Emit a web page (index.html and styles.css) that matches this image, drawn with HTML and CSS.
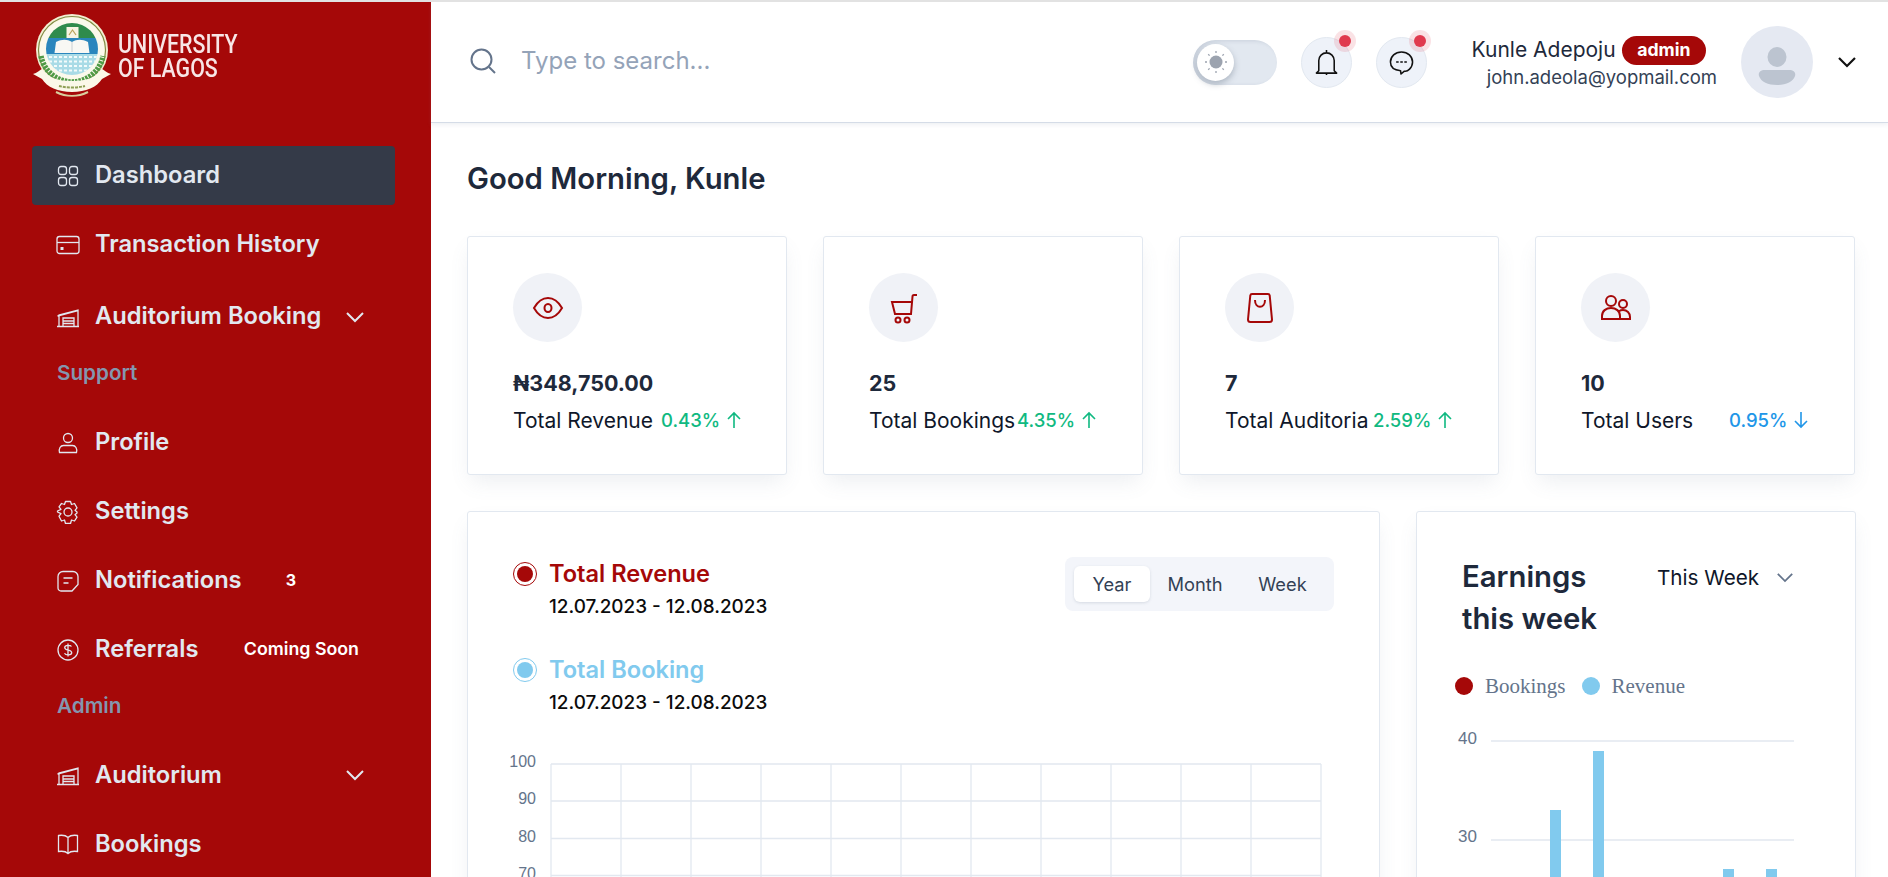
FILE: index.html
```html
<!DOCTYPE html>
<html lang="en">
<head>
<meta charset="utf-8">
<title>Dashboard</title>
<link rel="stylesheet" href="styles.css">
</head>
<body>
<div class="shell">
  <aside class="sidebar">
    <div class="brand">
      <svg class="crest" viewBox="0 0 80 84" aria-hidden="true">
        <defs><clipPath id="field"><circle cx="40" cy="35" r="26"/></clipPath></defs>
        <circle cx="40" cy="36" r="36" fill="#f3eed2"/>
        <circle cx="40" cy="36" r="33.500" fill="none" stroke="#7f8c45" stroke-width="1.200"/>
        <circle cx="40" cy="36" r="32.500" fill="#fbf9ec"/>
        <g clip-path="url(#field)">
          <rect x="10" y="5" width="60" height="19" fill="#2f8b4c"/>
          <rect x="10" y="24" width="60" height="16" fill="#2a86bd"/>
          <rect x="10" y="40" width="60" height="24" fill="#a9dbe6"/>
          <path d="M12 43h56M12 47.500h56M12 52h56M12 56.500h56" stroke="#f2fbfb" stroke-width="1.800" stroke-dasharray="3 2"/>
        </g>
        <rect x="34.500" y="13" width="12" height="11" fill="#f7f4e2"/>
        <path d="M37 21l3.500-5 3.500 5" fill="none" stroke="#b9a35a" stroke-width="1.200"/>
        <path d="M24 28c6-3 11-3 16 0 5-3 10-3 16 0l1.500 11h-35z" fill="#f8f8f4"/>
        <path d="M40 28v10" stroke="#c8ced2" stroke-width="1"/>
        <path d="M9 42a31.500 31.500 0 0 0 62 0" fill="none" stroke="#4f9a45" stroke-width="5.500" stroke-dasharray="2.600 1"/>
        <path d="M1 60c4-1 7-4 9-5 7 9 16 12 30 12s23-3 30-12c2 1 5 4 9 5l-9 5c-5 8-16 13-30 13S15 73 10 65z" fill="#fbf8e8"/>
        <path d="M27 72c8 2 18 2 26 0" stroke="#8f9f55" stroke-width="2" fill="none" stroke-dasharray="3 1"/>
        <path d="M24 78c10 5 22 5 32 0" stroke="#d8cf9e" stroke-width="2" fill="none"/>
      </svg>
      <div class="brand-name">UNIVERSITY<br>OF LAGOS</div>
    </div>
    <nav class="nav">
      <a class="nav-item active">
        <svg class="nav-icon" viewBox="0 0 24 24"><rect x="2.500" y="2.500" width="8" height="8" rx="2.500"/><rect x="13.500" y="2.500" width="8" height="8" rx="2.500"/><rect x="2.500" y="13.500" width="8" height="8" rx="2.500"/><rect x="13.500" y="13.500" width="8" height="8" rx="2.500"/></svg>
        <span class="nav-text">Dashboard</span>
      </a>
      <a class="nav-item">
        <svg class="nav-icon" viewBox="0 0 24 24"><rect x="1" y="3.500" width="22" height="17" rx="2.500"/><path d="M1 9.500h22"/><rect x="4.500" y="14" width="3" height="3" fill="currentColor" stroke="none"/></svg>
        <span class="nav-text">Transaction History</span>
      </a>
      <a class="nav-item nav-item-wide">
        <svg class="nav-icon" viewBox="0 0 24 24"><path d="M1 21.500h22M3 21.500V10l19-5v16.500M1.500 11L22 5.500M7 21.500V13h11v8.500M7 16h11M7 18.500h11"/></svg>
        <span class="nav-text">Auditorium Booking</span>
        <svg class="nav-chevron" viewBox="0 0 20 12"><path d="M2 2l8 8 8-8"/></svg>
      </a>
      <div class="nav-label">Support</div>
      <a class="nav-item">
        <svg class="nav-icon" viewBox="0 0 24 24"><circle cx="12" cy="7" r="4.500"/><path d="M3.500 21.500c-1-4 1-7 4-7h9c3 0 5 3 4 7z"/></svg>
        <span class="nav-text">Profile</span>
      </a>
      <a class="nav-item">
        <svg class="nav-icon" viewBox="0 0 24 24"><circle cx="12" cy="12" r="4"/><path d="M9.500 1.500h5l1 3 3-1 2.500 4.300-2 2.500 2 1.700v1l-2 1.700 2 2.500-2.500 3.800-3-1-1 3.500h-5l-1-3.500-3 1L3 16.200l2-2.500-3.500-1.700v-1L5 9.300 3 6.800l2.500-3.300 3 1z" stroke-linejoin="round"/></svg>
        <span class="nav-text">Settings</span>
      </a>
      <a class="nav-item">
        <svg class="nav-icon" viewBox="0 0 24 24"><path d="M7 2.500h10a5 5 0 0 1 5 5v8l-6 6.500H5a3 3 0 0 1-3-3V7.500a5 5 0 0 1 5-5z"/><path d="M7.500 9h9M7.500 14h5"/></svg>
        <span class="nav-text">Notifications</span>
        <span class="nav-count">3</span>
      </a>
      <a class="nav-item">
        <svg class="nav-icon" viewBox="0 0 24 24"><circle cx="12" cy="12" r="10"/><path d="M15.500 8.500c-1-1.500-6.500-2-6.800 1 0 3.500 7 1.800 7 5.200 0 2.800-6 2.800-7.200.6M12 5.500v13"/></svg>
        <span class="nav-text">Referrals</span>
        <span class="nav-soon">Coming Soon</span>
      </a>
      <div class="nav-label nav-label-admin">Admin</div>
      <a class="nav-item">
        <svg class="nav-icon" viewBox="0 0 24 24"><path d="M1 21.500h22M3 21.500V10l19-5v16.500M1.500 11L22 5.500M7 21.500V13h11v8.500M7 16h11M7 18.500h11"/></svg>
        <span class="nav-text">Auditorium</span>
        <svg class="nav-chevron" viewBox="0 0 20 12"><path d="M2 2l8 8 8-8"/></svg>
      </a>
      <a class="nav-item">
        <svg class="nav-icon" viewBox="0 0 24 24"><path d="M12 5.500C10 3.500 6 3 2.500 3.500v16c3.500-.5 7.500 0 9.500 2 2-2 6-2.500 9.500-2v-16C18 3 14 3.500 12 5.500zM12 5.500v16"/></svg>
        <span class="nav-text">Bookings</span>
      </a>
    </nav>
  </aside>

  <div class="content">
    <header class="topbar">
      <svg class="search-icon" viewBox="0 0 26 26"><circle cx="11.500" cy="11.500" r="10"/><path d="M19 19l6 6"/></svg>
      <span class="search-text">Type to search...</span>
      <div class="topbar-right">
        <div class="toggle">
          <div class="toggle-knob">
            <svg class="sun" viewBox="0 0 24 24"><circle cx="12" cy="12" r="6.500" fill="#9ca3af"/><path d="M12 1v2M12 21v2M1 12h2M21 12h2M4.200 4.200l1.400 1.400M18.400 18.400l1.400 1.400M4.200 19.800l1.400-1.400M18.400 5.600l1.400-1.400" stroke="#9ca3af" stroke-width="1.300"/></svg>
          </div>
        </div>
        <div class="round-btn">
          <svg class="round-icon" viewBox="0 0 24 28"><path d="M12 1v2.500M12 25v2M4 22.500V12a8 8 0 0 1 16 0v10.500l2.500 2.500h-21z" stroke-linejoin="round"/></svg>
          <span class="dot"></span>
        </div>
        <div class="round-btn">
          <svg class="round-icon" viewBox="0 0 26 26"><path d="M13 2c6.500 0 11.500 4.500 11.500 10.500S19 23 16 22l-3.500 3-.5-3.500C6 21 1.500 18 1.500 12.500 1.500 6.500 6.500 2 13 2z" stroke-linejoin="round"/><path d="M8 12.500h1.500M12.300 12.500h1.500M16.500 12.500H18" stroke-linecap="round"/></svg>
          <span class="dot"></span>
        </div>
        <div class="user">
          <div class="user-line"><span class="user-name">Kunle Adepoju</span><span class="badge">admin</span></div>
          <div class="user-mail">john.adeola@yopmail.com</div>
        </div>
        <div class="avatar">
          <svg viewBox="0 0 72 72"><ellipse cx="36" cy="31" rx="9.500" ry="10" fill="#bcc4d0"/><path d="M24 44h24c5 0 7 3 6 6-2 6-9 9-18 9s-16-3-18-9c-1-3 1-6 6-6z" fill="#bcc4d0"/></svg>
        </div>
        <svg class="user-chevron" viewBox="0 0 20 12"><path d="M2 2l8 8 8-8"/></svg>
      </div>
    </header>

    <main class="main">
      <h1 class="greeting">Good Morning, Kunle</h1>
      <section class="stats">
        <article class="card stat">
          <div class="stat-icon"><svg viewBox="0 0 32 32"><path d="M2 16C6 9 11 6 16 6s10 3 14 10c-4 7-9 10-14 10S6 23 2 16z"/><ellipse cx="16" cy="16" rx="3.500" ry="4"/></svg></div>
          <div class="stat-value">₦348,750.00</div>
          <div class="stat-row"><span class="stat-label">Total Revenue</span><span class="stat-pct up">0.43%</span><svg class="stat-arrow up" viewBox="0 0 16 18"><path d="M8 17V2M2 8l6-6 6 6"/></svg></div>
        </article>
        <article class="card stat">
          <div class="stat-icon"><svg viewBox="0 0 32 32"><path d="M29 3h-3c-1 0-1.500.5-1.500 1.500L23 22H7L4 10h21"/><circle cx="10" cy="28" r="2.500"/><circle cx="19" cy="28" r="2.500"/></svg></div>
          <div class="stat-value">25</div>
          <div class="stat-row"><span class="stat-label">Total Bookings</span><span class="stat-pct up">4.35%</span><svg class="stat-arrow up" viewBox="0 0 16 18"><path d="M8 17V2M2 8l6-6 6 6"/></svg></div>
        </article>
        <article class="card stat">
          <div class="stat-icon"><svg viewBox="0 0 32 32"><path d="M8 2h16c1 0 1.500.5 1.700 1.500l2.300 24c0 1.500-1 2.500-2.500 2.500h-19C5 30 4 29 4 27.500l2.300-24C6.500 2.500 7 2 8 2z" stroke-linejoin="round"/><path d="M11 8c0 9 10 9 10 0"/></svg></div>
          <div class="stat-value">7</div>
          <div class="stat-row"><span class="stat-label">Total Auditoria</span><span class="stat-pct up">2.59%</span><svg class="stat-arrow up" viewBox="0 0 16 18"><path d="M8 17V2M2 8l6-6 6 6"/></svg></div>
        </article>
        <article class="card stat">
          <div class="stat-icon"><svg viewBox="0 0 32 32"><circle cx="11" cy="9" r="5"/><circle cx="23" cy="12" r="4"/><path d="M2 27v-3c0-5 4-8 9-8s9 3 9 8v3zM20 27h10v-2c0-4-3-7-7-7-1.500 0-3 .5-4 1.200"/></svg></div>
          <div class="stat-value">10</div>
          <div class="stat-row"><span class="stat-label">Total Users</span><span class="stat-pct down">0.95%</span><svg class="stat-arrow down" viewBox="0 0 16 18"><path d="M8 1v15M2 10l6 6 6-6"/></svg></div>
        </article>
      </section>

      <section class="charts">
        <article class="card chart-main">
          <div class="chart-head">
            <div class="series-list">
              <div class="series">
                <span class="radio radio-red"></span>
                <div><div class="series-name name-red">Total Revenue</div><div class="series-date">12.07.2023 - 12.08.2023</div></div>
              </div>
              <div class="series">
                <span class="radio radio-blue"></span>
                <div><div class="series-name name-blue">Total Booking</div><div class="series-date">12.07.2023 - 12.08.2023</div></div>
              </div>
            </div>
            <div class="tabs"><span class="tab tab-on">Year</span><span class="tab">Month</span><span class="tab">Week</span></div>
          </div>
          <svg class="line-chart" viewBox="0 0 810 160">
            <g class="axis-text"><text x="23" y="4" text-anchor="end">100</text><text x="23" y="41" text-anchor="end">90</text><text x="23" y="79" text-anchor="end">80</text><text x="23" y="116" text-anchor="end">70</text></g>
            <g class="grid-lines">
              <path d="M38 1h770M38 38h770M38 75.500h770M38 112.500h770"/>
              <path d="M38 1v150M108 1v150M178 1v150M248 1v150M318 1v150M388 1v150M458 1v150M528 1v150M598 1v150M668 1v150M738 1v150M808 1v150"/>
            </g>
          </svg>
        </article>
        <article class="card chart-side">
          <div class="side-head">
            <h2 class="side-title">Earnings this week</h2>
            <div class="side-select"><span>This Week</span><svg class="select-chevron" viewBox="0 0 20 12"><path d="M2 2l8 8 8-8"/></svg></div>
          </div>
          <div class="legend">
            <span class="legend-dot dot-red"></span><span class="legend-text">Bookings</span>
            <span class="legend-dot dot-blue"></span><span class="legend-text">Revenue</span>
          </div>
          <svg class="bar-chart" viewBox="0 0 360 200">
            <g class="axis-text"><text x="17" y="13">40</text><text x="17" y="111">30</text></g>
            <path class="grid-lines" d="M50 10h303M50 109h303"/>
            <g class="bars"><rect x="109" y="79" width="11" height="121"/><rect x="152" y="20" width="11" height="180"/><rect x="282" y="138" width="11" height="62"/><rect x="325" y="138" width="11" height="62"/></g>
          </svg>
        </article>
      </section>
    </main>
  </div>
</div>
</body>
</html>
```

FILE: styles.css
```css
* { box-sizing: border-box; }
html, body { margin: 0; height: 877px; overflow: hidden; background: #fff; }
body { font-family: Inter, "Noto Sans", sans-serif; color: #1e293b; }
.shell { display: flex; height: 877px; border-top: 2px solid #e2e2e2; overflow: hidden; }

/* sidebar */
.sidebar { flex: 0 0 431px; background: #a50808; padding: 12px 36px 0 32px; overflow: hidden; }
.brand { display: flex; align-items: flex-start; height: 132px; }
.crest { width: 80px; height: 84px; flex: none; filter: blur(.6px); }
.brand-name { margin: 19px 0 0 6px; font-family: Roboto, sans-serif; font-size: 25px; line-height: 24px; font-weight: 500; color: #f8e6e6; white-space: nowrap; transform: scaleX(.855); transform-origin: left center; filter: blur(.3px); }
.nav { display: flex; flex-direction: column; }
.nav-item { display: flex; align-items: center; height: 59px; margin-bottom: 10px; padding: 0 30px 0 25px; border-radius: 4px; color: #e2e8f0; flex: none; }
.nav-item.active { background: #343a48; }
.nav-item-wide { margin-top: 3px; }
.nav-icon { width: 24px; height: 24px; flex: none; fill: none; stroke: currentColor; stroke-width: 1.3; margin: 0 15px 0 -1px; }
.nav-text { font-size: 23.700px; font-weight: 600; white-space: nowrap; margin-top: -1.600px; }
.nav-chevron { width: 20px; height: 12px; flex: none; fill: none; stroke: currentColor; stroke-width: 2; margin-left: auto; }
.nav-count { margin: -1.600px 69px 0 auto; font-size: 16px; font-weight: 700; color: #fff; }
.nav-soon { margin: -1.600px 6px 0 auto; font-size: 17.800px; font-weight: 600; color: #fff; white-space: nowrap; }
.nav-label { margin: 5px 0 28px 25px; height: 24px; line-height: 24px; font-size: 20.700px; font-weight: 600; color: #8496ae; }
.nav-label-admin { margin-top: 4.600px; margin-bottom: 28.200px; }

/* top bar */
.content { flex: 1; min-width: 0; display: flex; flex-direction: column; }
.topbar { flex: none; height: 121px; display: flex; align-items: center; padding: 0 31px 0 39px; border-bottom: 1px solid #d5dce7; box-shadow: 0 2px 4px rgba(148,163,184,.15); }
.search-icon { width: 26px; height: 26px; fill: none; stroke: #64748b; stroke-width: 2; flex: none; margin-top: -2px; }
.search-text { margin: -3px 0 0 25px; font-size: 24px; color: #94a3b8; }
.topbar-right { margin-left: auto; display: flex; align-items: center; }
.toggle { width: 84px; height: 45px; border-radius: 23px; background: #e2e8f0; padding: 4px; margin-right: 24px; box-shadow: inset 3px 1px 4px rgba(100,116,139,.2); }
.toggle-knob { width: 37px; height: 37px; border-radius: 50%; background: #fff; display: flex; align-items: center; justify-content: center; box-shadow: 0 3px 6px rgba(71,85,105,.35); }
.sun { width: 24px; height: 24px; fill: none; }
.round-btn { position: relative; width: 51px; height: 51px; border-radius: 50%; background: #eef2f9; border: 1px solid #e2e8f0; display: flex; align-items: center; justify-content: center; margin-right: 24px; }
.round-btn + .round-btn { margin-right: 43px; }
.round-icon { width: 25px; height: 27px; fill: none; stroke: #111; stroke-width: 1.600; }
.dot { position: absolute; left: 37px; top: -3px; width: 12px; height: 12px; border-radius: 50%; background: #e03a4e; box-shadow: 0 0 0 5px rgba(224,58,78,.15); }
.user { width: 247px; display: flex; flex-direction: column; align-items: flex-end; margin: 1px 24px 0 0; }
.user-line { display: flex; align-items: center; height: 30px; margin-right: 11px; }
.user-name { font-size: 21px; color: #1e293b; white-space: nowrap; margin-top: -2px; }
.badge { margin-left: 6px; height: 29px; line-height: 28px; padding: 0 15.500px; border-radius: 15px; background: #a50808; color: #fff; font-size: 17.700px; font-weight: 700; }
.user-mail { font-size: 18.500px; line-height: 26px; margin-top: -2px; color: #334155; white-space: nowrap; }
.avatar { width: 72px; height: 72px; border-radius: 50%; background: #e5e9f2; flex: none; }
.avatar svg { display: block; width: 72px; height: 72px; }
.user-chevron { width: 20px; height: 12px; flex: none; margin-left: 24px; fill: none; stroke: #111; stroke-width: 2.200; }

/* main */
.main { flex: 1; padding: 0 32px 0 36px; overflow: hidden; }
.greeting { margin: 37px 0 38px; font-size: 29.300px; line-height: 38px; font-weight: 600; color: #1e293b; }
.card { background: #fff; border: 1px solid #e2e8f0; border-radius: 3px; box-shadow: 0 10px 20px -4px rgba(100,116,139,.12); }
.stats { display: grid; grid-template-columns: repeat(4, 320px); gap: 36px; }
.stat { height: 239px; padding: 36px 0 0 45px; }
.stat-icon { width: 69px; height: 69px; border-radius: 50%; background: #f0f2f7; display: flex; align-items: center; justify-content: center; }
.stat-icon svg { width: 32px; height: 32px; fill: none; stroke: #a50808; stroke-width: 2; }
.stat-value { margin-top: 25px; font-size: 21.500px; line-height: 32px; font-weight: 700; color: #1e293b; }
.stat-row { display: flex; align-items: center; margin-top: 7px; height: 28px; }
.stat-label { width: 148px; flex: none; font-size: 21px; color: #0f172a; white-space: nowrap; }
.stat-pct { font-size: 18.500px; font-weight: 500; white-space: nowrap; }
.stat-arrow { width: 16px; height: 18px; margin-left: 6px; fill: none; stroke-width: 1.600; stroke: currentColor; }
.up { color: #10b981; }
.down { color: #2196e8; }

/* charts */
.charts { display: grid; grid-template-columns: 913px 1fr; gap: 36px; margin-top: 36px; }
.card.chart-main, .card.chart-side { height: 500px; }
.chart-main { padding: 45px 45px 0 45px; }
.chart-head { display: flex; justify-content: space-between; align-items: flex-start; }
.series-list { display: flex; flex-direction: column; gap: 34px; margin-top: 2px; }
.series { display: flex; gap: 12px; }
.radio { width: 24px; height: 24px; border-radius: 50%; flex: none; padding: 3px; margin-top: 3px; background-clip: content-box; }
.radio-red { border: 1.500px solid #a50808; background-color: #a50808; }
.radio-blue { border: 1.500px solid #81caee; background-color: #81caee; }
.series-name { font-size: 23.600px; line-height: 30px; font-weight: 600; }
.name-red { color: #a50808; }
.name-blue { color: #81caee; }
.series-date { font-size: 18.900px; line-height: 28px; margin-top: 4px; font-weight: 500; color: #0b0b0b; }
.tabs { display: grid; grid-template-columns: 76px 90px 85px; height: 54px; padding: 9px; border-radius: 8px; background: #f3f5fa; }
.tab { height: 36px; line-height: 36px; text-align: center; font-size: 18.300px; color: #334155; }
.tab-on { background: #fff; border-radius: 6px; box-shadow: 0 1px 3px rgba(100,116,139,.2); }
.line-chart { display: block; width: 810px; height: 160px; margin-top: 46px; overflow: visible; }
.axis-text { font-family: "Liberation Sans", Arial, sans-serif; font-size: 16px; fill: #64748b; }
.grid-lines { fill: none; stroke: #e2e8f0; stroke-width: 1.300; }
.chart-side { padding: 45px 0 0 45px; }
.side-head { display: flex; align-items: flex-start; }
.side-title { margin: -1px 0 1px; width: 190px; flex: none; padding-right: 20px; font-size: 29.300px; line-height: 42px; font-weight: 600; color: #1e293b; }
.side-select { display: flex; align-items: center; height: 42px; margin: -1px 0 0 5px; font-size: 20.700px; color: #0f172a; white-space: nowrap; }
.select-chevron { width: 18px; height: 11px; margin-left: 17px; fill: none; stroke: #64748b; stroke-width: 2; }
.legend { display: flex; align-items: center; height: 26px; margin: 32px 0 0 -7px; font-family: "Liberation Serif", serif; font-size: 21px; color: #64748b; }
.legend-dot { width: 18px; height: 18px; border-radius: 50%; flex: none; margin-right: 12px; }
.legend-text { margin-right: 16px; }
.dot-red { background: #a50808; }
.dot-blue { background: #81caee; }
.bar-chart { display: block; width: 360px; height: 200px; margin: 32px 0 0 -21px; overflow: visible; }
.bar-chart .axis-text { font-size: 17px; }
.bars { fill: #81caee; }
```
